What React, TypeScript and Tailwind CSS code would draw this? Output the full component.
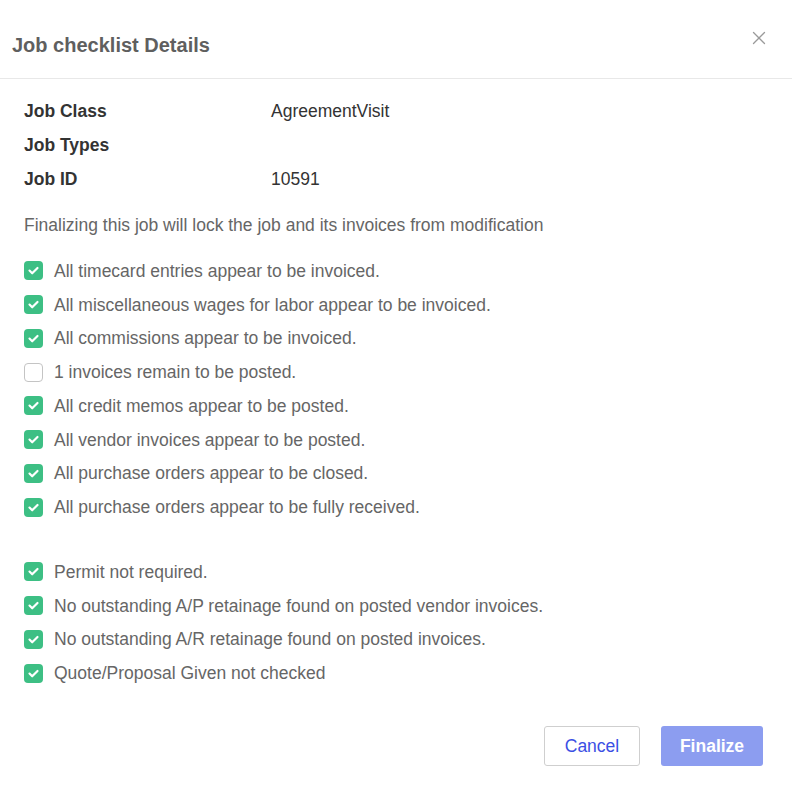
import { X } from "lucide-react";

const checks: { label: string; done: boolean }[] = [
  { label: "All timecard entries appear to be invoiced.", done: true },
  { label: "All miscellaneous wages for labor appear to be invoiced.", done: true },
  { label: "All commissions appear to be invoiced.", done: true },
  { label: "1 invoices remain to be posted.", done: false },
  { label: "All credit memos appear to be posted.", done: true },
  { label: "All vendor invoices appear to be posted.", done: true },
  { label: "All purchase orders appear to be closed.", done: true },
  { label: "All purchase orders appear to be fully received.", done: true },
];

const extras = [
  "Permit not required.",
  "No outstanding A/P retainage found on posted vendor invoices.",
  "No outstanding A/R retainage found on posted invoices.",
  "Quote/Proposal Given not checked",
];

function Box({ done }: { done: boolean }) {
  if (!done) {
    return <span className="block h-[19px] w-[19px] shrink-0 rounded-[4px] border border-[#c4c4c4] bg-white" />;
  }
  return (
    <span className="flex h-[19px] w-[19px] shrink-0 items-center justify-center rounded-[4px] bg-[#3dbf84]">
      <svg width="13" height="13" viewBox="0 0 12 12" fill="none">
        <path d="M2.3 6.1l2.5 2.5 4.9-5" stroke="white" strokeWidth="2" strokeLinecap="round" strokeLinejoin="round" />
      </svg>
    </span>
  );
}

function Row({ label, done }: { label: string; done: boolean }) {
  return (
    <li className="flex h-[33.75px] items-center gap-[11px]">
      <Box done={done} />
      <span>{label}</span>
    </li>
  );
}

export default function App() {
  return (
    <div className="min-h-[811px] w-[792px] bg-white font-['Liberation_Sans',Arial,sans-serif] text-[17.5px]">
      {/* Header */}
      <div className="flex h-[79px] items-start justify-between border-b border-[#e8e8e8] pl-3 pr-[22px]">
        <h2 className="mt-[32px] text-[20px] font-bold leading-[26px] text-[#5f5f5f]">Job checklist Details</h2>
        <button className="mt-[27px] text-[#9a9a9a]">
          <X size={22} strokeWidth={1.4} />
        </button>
      </div>

      <div className="px-6 pt-[15px] text-[#666]">
        {/* Job info */}
        <dl className="grid grid-cols-[247px_1fr] text-[#333]">
          <dt className="h-[34px] leading-[34px] font-bold">Job Class</dt>
          <dd className="h-[34px] leading-[34px]">AgreementVisit</dd>
          <dt className="h-[34px] leading-[34px] font-bold">Job Types</dt>
          <dd className="h-[34px] leading-[34px]"></dd>
          <dt className="h-[34px] leading-[34px] font-bold">Job ID</dt>
          <dd className="h-[34px] leading-[34px]">10591</dd>
        </dl>

        <p className="mt-[17px] leading-[24px]">Finalizing this job will lock the job and its invoices from modification</p>

        <ul className="mt-[17px]">
          {checks.map((c) => (
            <Row key={c.label} label={c.label} done={c.done} />
          ))}
        </ul>

        <ul className="mt-[31px]">
          {extras.map((e) => (
            <Row key={e} label={e} done />
          ))}
        </ul>

        {/* Footer */}
        <div className="mt-[36px] flex justify-end gap-[21px] pr-[5px]">
          <button className="h-[40px] w-[96px] rounded-[3px] border border-[#cfcfcf] bg-white text-[#3b4fe4]">Cancel</button>
          <button className="h-[40px] w-[102px] rounded-[3px] bg-[#8c9df0] font-bold text-white">Finalize</button>
        </div>
      </div>
    </div>
  );
}
